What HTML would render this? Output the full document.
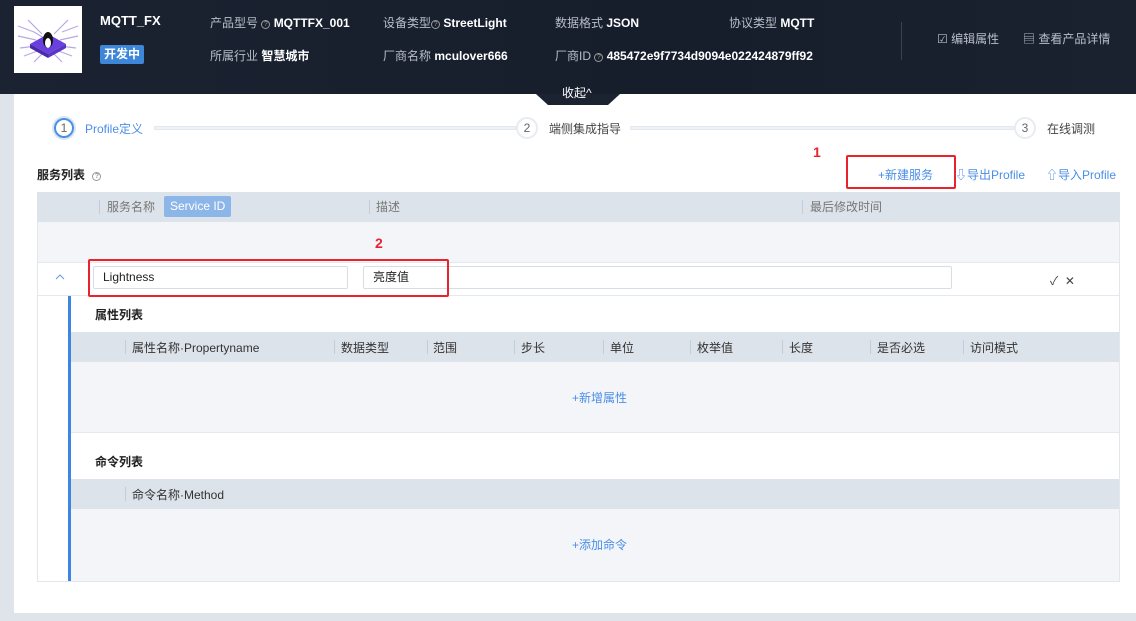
<!DOCTYPE html>
<html><head><meta charset="utf-8"><style>
*{margin:0;padding:0;box-sizing:border-box}
body{width:1136px;height:621px;overflow:hidden;background:#dfe3ea;font-family:"Liberation Sans","Noto Sans CJK SC",sans-serif;font-size:12px;color:#333;position:relative}
.a{position:absolute;white-space:nowrap}
.hd{position:absolute;left:0;top:0;width:1136px;height:94px;background:linear-gradient(90deg,#1b2332,#161e2b 60%,#1a2230)}
.lab{color:#b8bec8;font-size:12px}
.val{color:#fff;font-weight:bold;font-size:12px}
.q{display:inline-block;width:9px;height:9px;border:1px solid #999;border-radius:50%;font-size:7px;line-height:8px;text-align:center;vertical-align:1px;color:#999}
.panel{position:absolute;left:14px;top:94px;width:1122px;height:519px;background:#fff}
.circ{position:absolute;width:22px;height:22px;border-radius:50%;border:2px solid #e8ebf0;background:#fff;text-align:center;line-height:18px;color:#666;font-size:12px}
.line{position:absolute;height:4px;background:#eef1f5;border:1px solid #e3e7ee;top:126px}
.th{position:absolute;background:#dde3ea;color:#666}
.sep{position:absolute;width:1px;height:14px;background:#c6ccd5}
.blue{color:#4a8ee6}
.red{position:absolute;border:2px solid #e8232e;border-radius:2px}
.inp{position:absolute;height:23px;border:1px solid #d8dce3;border-radius:2px;background:#fff;padding-left:9px;line-height:21px;font-size:12px;color:#222}
</style></head><body>
<div class="hd"></div>
<div class="a" style="left:14px;top:6px;width:68px;height:67px;background:#fff">
<svg width="68" height="67" viewBox="0 0 68 67"><g stroke="#b9a6e6" stroke-width="1.2" fill="none"><path d="M4 20 L20 26 L30 32M4 30 L22 34M6 42 L22 40M10 50 L26 44M64 20 L48 26M64 30 L46 34M62 42 L46 40M58 50 L42 44M14 14 L28 28M54 14 L40 28M20 56 L30 46M48 56 L38 46"/></g><path d="M16 38 L34 28 L52 38 L34 48Z" fill="#6a3fe0"/><path d="M16 38 L34 48 L34 52 L16 42Z" fill="#4a2aa8"/><path d="M52 38 L34 48 L34 52 L52 42Z" fill="#5a34c4"/><ellipse cx="34" cy="34" rx="5" ry="8" fill="#111"/><ellipse cx="34" cy="37" rx="3" ry="5" fill="#fff"/></svg></div>
<div class="a val" style="left:100px;top:13px;font-size:13px">MQTT_FX</div>
<div class="a" style="left:100px;top:45px;background:#3d86d8;color:#fff;font-weight:bold;padding:1px 4px;font-size:12px;line-height:17px;border-radius:2px">开发中</div>
<div class="a" style="left:210px;top:14px"><span class="lab">产品型号 </span><span class="q">?</span> <span class="val">MQTTFX_001</span></div>
<div class="a" style="left:210px;top:47px"><span class="lab">所属行业 </span><span class="val">智慧城市</span></div>
<div class="a" style="left:383px;top:14px"><span class="lab">设备类型</span><span class="q">?</span> <span class="val">StreetLight</span></div>
<div class="a" style="left:383px;top:47px"><span class="lab">厂商名称 </span><span class="val">mculover666</span></div>
<div class="a" style="left:555px;top:14px"><span class="lab">数据格式 </span><span class="val">JSON</span></div>
<div class="a" style="left:555px;top:47px"><span class="lab">厂商ID </span><span class="q">?</span> <span class="val">485472e9f7734d9094e022424879ff92</span></div>
<div class="a" style="left:729px;top:14px"><span class="lab">协议类型 </span><span class="val">MQTT</span></div>
<div class="a" style="left:901px;top:22px;width:1px;height:38px;background:#3a4252"></div>
<div class="a lab" style="left:937px;top:30px;font-size:12px">☑ 编辑属性</div>
<div class="a lab" style="left:1023px;top:30px;font-size:12px">▤ 查看产品详情</div>
<div class="panel"></div>
<svg class="a" style="left:536px;top:92px" width="84" height="14"><path d="M0 2 L84 2 L72 13 L12 13Z" fill="#1b2230"/></svg>
<div class="a" style="left:562px;top:84px;color:#fff;font-size:12px">收起^</div>
<div class="circ" style="left:52px;top:116px;width:24px;height:24px;border:2px solid #dbe7f7"><div style="border:2px solid #4a8ee6;border-radius:50%;width:20px;height:20px;line-height:16px;color:#666">1</div></div>
<div class="a blue" style="left:85px;top:120px;font-size:12px">Profile定义</div>
<div class="line" style="left:154px;width:362px"></div>
<div class="circ" style="left:516px;top:117px">2</div>
<div class="a" style="left:549px;top:120px;color:#444">端侧集成指导</div>
<div class="line" style="left:630px;width:384px"></div>
<div class="circ" style="left:1014px;top:117px">3</div>
<div class="a" style="left:1047px;top:120px;color:#444">在线调测</div>
<div class="a" style="left:37px;top:166px;font-weight:bold;color:#222">服务列表 <span class="q" style="margin-left:4px">?</span></div>
<div class="a" style="left:813px;top:144px;color:#e8232e;font-weight:bold;font-size:14px">1</div>
<div class="red" style="left:846px;top:155px;width:110px;height:34px"></div>
<div class="a blue" style="left:878px;top:166px">+新建服务</div>
<div class="a blue" style="left:955px;top:166px">⇩导出Profile</div>
<div class="a blue" style="left:1046px;top:166px">⇧导入Profile</div>
<div class="a" style="left:37px;top:192px;width:1083px;height:390px;border:1px solid #e3e6eb"></div>
<div class="th" style="left:37px;top:192px;width:1083px;height:30px"></div>
<div class="sep" style="left:99px;top:200px"></div>
<div class="a" style="left:107px;top:198px;color:#777">服务名称</div>
<div class="a" style="left:164px;top:196px;background:#8db6e8;color:#fff;padding:0 6px;line-height:21px;border-radius:2px">Service ID</div>
<div class="sep" style="left:369px;top:200px"></div><div class="a" style="left:376px;top:198px;color:#777">描述</div>
<div class="sep" style="left:802px;top:200px"></div><div class="a" style="left:810px;top:198px;color:#777">最后修改时间</div>
<div class="a" style="left:38px;top:222px;width:1081px;height:40px;background:#f3f5f8"></div>
<div class="a" style="left:38px;top:262px;width:1081px;height:1px;background:#e5e8ed"></div>
<div class="a" style="left:38px;top:295px;width:1081px;height:1px;background:#e5e8ed"></div>
<div class="a" style="left:375px;top:235px;color:#e8232e;font-weight:bold;font-size:14px">2</div>
<svg class="a" style="left:55px;top:274px" width="10" height="6"><path d="M1 5 L5 1 L9 5" stroke="#6b9ad8" fill="none"/></svg>
<div class="inp" style="left:93px;top:266px;width:255px">Lightness</div>
<div class="inp" style="left:363px;top:266px;width:589px">亮度值</div>
<div class="red" style="left:88px;top:259px;width:361px;height:38px"></div>
<div class="a" style="left:1050px;top:272px;color:#444">✓ &nbsp;✕</div>
<div class="a" style="left:68px;top:296px;width:3px;height:285px;background:#3d86e0"></div>
<div class="a" style="left:95px;top:306px;font-weight:bold;color:#222">属性列表</div>
<div class="th" style="left:71px;top:332px;width:1048px;height:30px"></div>
<div class="a" style="left:71px;top:362px;width:1048px;height:71px;background:#f3f5f8;border-bottom:1px solid #e5e8ed"></div>
<div class="sep" style="left:125px;top:340px"></div><div class="a" style="left:132px;top:339px">属性名称·Propertyname</div>
<div class="sep" style="left:334px;top:340px"></div><div class="a" style="left:341px;top:339px">数据类型</div>
<div class="sep" style="left:427px;top:340px"></div><div class="a" style="left:433px;top:339px">范围</div>
<div class="sep" style="left:514px;top:340px"></div><div class="a" style="left:521px;top:339px">步长</div>
<div class="sep" style="left:603px;top:340px"></div><div class="a" style="left:610px;top:339px">单位</div>
<div class="sep" style="left:690px;top:340px"></div><div class="a" style="left:697px;top:339px">枚举值</div>
<div class="sep" style="left:782px;top:340px"></div><div class="a" style="left:789px;top:339px">长度</div>
<div class="sep" style="left:870px;top:340px"></div><div class="a" style="left:877px;top:339px">是否必选</div>
<div class="sep" style="left:963px;top:340px"></div><div class="a" style="left:970px;top:339px">访问模式</div>
<div class="a blue" style="left:572px;top:389px">+新增属性</div>
<div class="a" style="left:95px;top:453px;font-weight:bold;color:#222">命令列表</div>
<div class="th" style="left:71px;top:479px;width:1048px;height:30px"></div>
<div class="sep" style="left:125px;top:487px"></div><div class="a" style="left:132px;top:486px">命令名称·Method</div>
<div class="a" style="left:71px;top:509px;width:1048px;height:72px;background:#f3f5f8"></div>
<div class="a blue" style="left:572px;top:536px">+添加命令</div>
</body></html>
